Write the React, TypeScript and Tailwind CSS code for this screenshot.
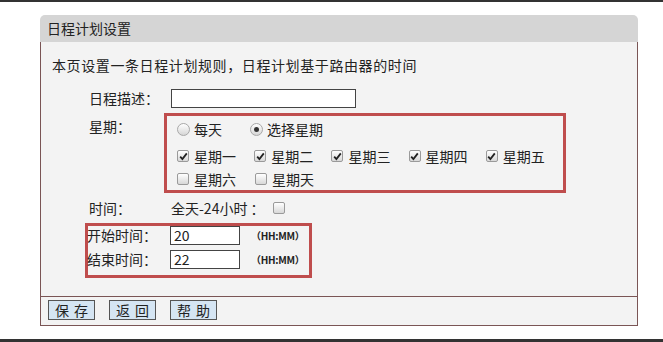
import React from 'react';

const font = { fontFamily: '"Noto Sans CJK SC", "Liberation Sans", sans-serif' };

const Box: React.FC<{ checked?: boolean }> = ({ checked }) => (
  <span className="relative inline-flex w-[12px] h-[12px] shrink-0 items-center justify-center rounded-[2px] border border-[#9a9a9a] bg-gradient-to-b from-white to-[#d8d8d8]">
    {checked && (
      <svg width="9" height="9" viewBox="0 0 9 9">
        <path d="M1.2 4.6 L3.4 7 L7.8 1.4" stroke="#222" strokeWidth="1.8" fill="none" />
      </svg>
    )}
  </span>
);

const Radio: React.FC<{ checked?: boolean }> = ({ checked }) => (
  <span className="inline-flex w-[13px] h-[13px] shrink-0 items-center justify-center rounded-full border border-[#a8a8a8] bg-gradient-to-b from-white to-[#d6d6d6]">
    {checked && <span className="w-[5px] h-[5px] rounded-full bg-[#333]" />}
  </span>
);

const App: React.FC = () => {
  const days1 = ['星期一', '星期二', '星期三', '星期四', '星期五'];
  const days2 = ['星期六', '星期天'];

  return (
    <div className="w-[663px] h-[342px] bg-white border-t-2 border-b-[3px] border-[#333] text-[#222] text-[14px]" style={font}>
      <div className="ml-[40px] mt-[13px] w-[598px]">
        {/* header */}
        <div className="h-[27px] bg-[#d5d5d5] rounded-t-[5px] px-[7px] leading-[27px]">日程计划设置</div>

        {/* body */}
        <div className="h-[254px] border-x border-[#7a5555] bg-[#f3f3f3]">
          <div className="pt-[13px] pl-[11px] leading-[20px] tracking-[0.6px]">
            本页设置一条日程计划规则，日程计划基于路由器的时间
          </div>

          <div className="pl-[48px]">
            {/* description */}
            <div className="flex items-center h-[19px] mt-[14px]">
              <div className="w-[82px]">日程描述：</div>
              <div className="w-[185px] h-[19px] border border-[#444] bg-white" />
            </div>

            {/* week */}
            <div className="flex mt-[5px]">
              <div className="w-[75px] pt-[4px] leading-[18px]">星期：</div>
              <div className="w-[402px] h-[80px] border-[3px] border-[#bf4d4d] pl-[10px]">
                <div className="flex items-center h-[22px] mt-[2px]">
                  <div className="flex items-center gap-[4px] w-[73px]">
                    <Radio />
                    <span>每天</span>
                  </div>
                  <div className="flex items-center gap-[4px]">
                    <Radio checked />
                    <span>选择星期</span>
                  </div>
                </div>
                <div className="flex items-center h-[22px] mt-[5px]">
                  {days1.map((d) => (
                    <div key={d} className="flex items-center gap-[5px] w-[78px]">
                      <Box checked />
                      <span>{d}</span>
                    </div>
                  ))}
                </div>
                <div className="flex items-center h-[22px] mt-[1px]">
                  {days2.map((d) => (
                    <div key={d} className="flex items-center gap-[5px] w-[78px]">
                      <Box />
                      <span>{d}</span>
                    </div>
                  ))}
                </div>
              </div>
            </div>

            {/* time */}
            <div className="flex items-center h-[20px] mt-[5px]">
              <div className="w-[82px]">时间：</div>
              <span>全天-24小时 ：</span>
              <span className="ml-[8px]">
                <Box />
              </span>
            </div>

            <div className="ml-[-4px] mt-[5px] w-[227px] border-[3px] border-[#bf4d4d] pb-[6px]">
              {[
                ['开始时间：', '20'],
                ['结束时间：', '22'],
              ].map(([label, val], i) => (
                <div key={label} className={`flex items-center h-[19px] ${i ? 'mt-[5px]' : ''}`}>
                  <div className="w-[83px] -ml-[1px]">{label}</div>
                  <div className="w-[70px] h-[19px] border border-[#444] bg-white pl-[3px] leading-[17px]">{val}</div>
                  <span className="ml-[11px] text-[10px] font-bold tracking-[-0.3px]">（HH:MM）</span>
                </div>
              ))}
            </div>
          </div>
        </div>

        {/* footer */}
        <div className="h-[30px] border border-[#7a5555] bg-[#f3f3f3] flex items-start gap-[14px] pl-[7px] pt-[3px]">
          {['保存', '返回', '帮助'].map((b) => (
            <button
              key={b}
              className="h-[20px] w-[47px] border border-[#555] bg-[#d5e5f3] leading-[18px] tracking-[5px] pl-[5px] text-[#222]"
            >
              {b}
            </button>
          ))}
        </div>
      </div>
    </div>
  );
};

export default App;
